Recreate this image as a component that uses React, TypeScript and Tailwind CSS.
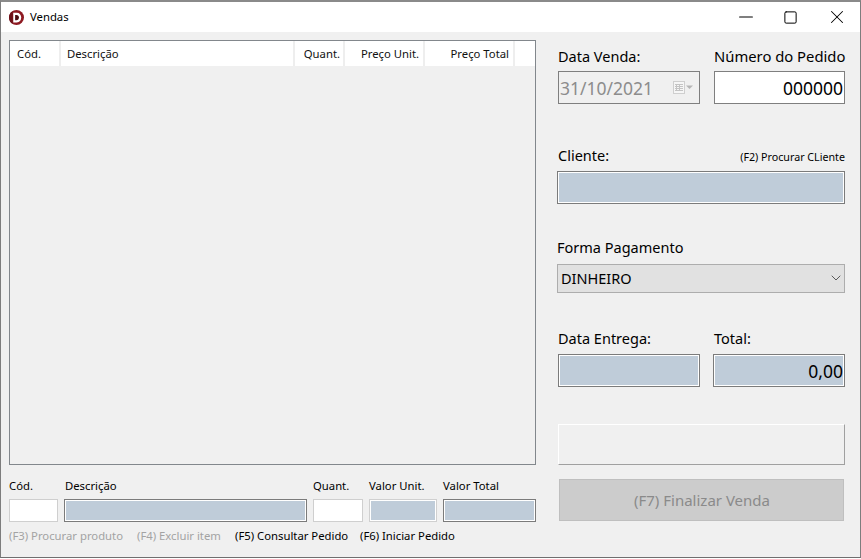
import { ChevronDown, Minus, Square, X } from "lucide-react"

const FONT = "font-['Noto_Sans','Open_Sans',sans-serif]"

const columns = [
  { label: "Cód.", width: "w-[51px]", align: "pl-[7px]" },
  { label: "Descrição", width: "w-[234px]", align: "pl-[6px]" },
  { label: "Quant.", width: "w-[50px]", align: "justify-end pr-[3px]" },
  { label: "Preço Unit.", width: "w-[80px]", align: "justify-end pr-[4px]" },
  { label: "Preço Total", width: "w-[90px]", align: "justify-end pr-[4px]" },
]

function Logo() {
  return (
    <svg width="15" height="15" viewBox="0 0 16 16" className="shrink-0">
      <circle cx="8" cy="8" r="8" fill="#8e1a22" />
      <path d="M0 8a8 8 0 0 1 4-7v14a8 8 0 0 1-4-7z" fill="#6d1219" />
      <path d="M4.5 2.8h3.7C11.3 2.8 13 5 13 8s-1.700 5.200-4.800 5.200H4.500z" fill="#fff" />
      <path d="M6.500 5.200h1.500c1.600 0 2.600 1.100 2.600 2.800s-1 2.800-2.600 2.800H6.500z" fill="#4a0c11" />
    </svg>
  )
}

function CalendarIcon() {
  return (
    <svg width="21" height="13" viewBox="0 0 21 13">
      <rect x="0.5" y="0.5" width="11" height="12" fill="#f6f6f6" stroke="#cfcfcf" />
      <path d="M2 3.500h8M2 5.500h8M2 7.500h8M2 9.500h8M3.500 3v7M6.500 3v7" stroke="#c4c4c4" strokeWidth="1" />
      <path d="M13 4.500h7l-3.500 3.500z" fill="#b5b5b5" />
    </svg>
  )
}

export default function App() {
  return (
    <div className={`${FONT} w-[861px] h-[559px] overflow-hidden bg-white text-black`}>
      <div className="h-[558px] border-t-2 border-x border-b border-t-[#8a8a8a] border-x-[#7d7d7d] border-b-[#6f6f6f] bg-[#f0f0f0] flex flex-col">
        <div className="h-[30px] bg-white flex items-center shrink-0">
          <div className="flex items-center gap-[6px] pl-[8px] text-[11.3px]">
            <Logo />
            <span>Vendas</span>
          </div>
          <div className="ml-auto flex items-center">
            <div className="w-[46px] flex justify-center translate-x-[1px]"><Minus size={22} strokeWidth={1.1} /></div>
            <div className="w-[46px] flex justify-center -translate-x-[1px]"><Square size={15} strokeWidth={1.6} /></div>
            <div className="w-[46px] flex justify-center"><X size={22} strokeWidth={1.1} /></div>
          </div>
        </div>

        <div className="flex flex-1 pl-[8px] pt-[8px]">
          <div className="w-[527px] shrink-0">
            <div className="h-[425px] border border-[#82878c] bg-[#f0f0f0]">
              <div className="h-[25px] bg-white flex text-[11.3px] text-[#111]">
                {columns.map((c) => (
                  <div key={c.label} className={`${c.width} ${c.align} flex items-center pt-[2px] border-r-2 border-[#eeeeee]`}>
                    {c.label}
                  </div>
                ))}
              </div>
            </div>

            <div className="mt-[13px] flex text-[11.3px] leading-[16px]">
              <div className="w-[55px] shrink-0">
                <div>Cód.</div>
                <div className="mt-[5px] w-[49px] h-[23px] bg-white border border-[#cfcfcf]" />
              </div>
              <div className="w-[249px] shrink-0">
                <div className="pl-[1px]">Descrição</div>
                <div className="mt-[5px] w-[243px] h-[23px] bg-[#bfccd9] border border-[#7b7b7b] outline outline-1 -outline-offset-2 outline-white" />
              </div>
              <div className="w-[56px] shrink-0">
                <div>Quant.</div>
                <div className="mt-[5px] w-[50px] h-[23px] bg-white border border-[#cfcfcf]" />
              </div>
              <div className="w-[74px] shrink-0">
                <div>Valor Unit.</div>
                <div className="mt-[5px] w-[68px] h-[23px] bg-[#bfccd9] border border-[#d0d0d0] outline outline-1 -outline-offset-2 outline-white" />
              </div>
              <div className="w-[93px] shrink-0">
                <div>Valor Total</div>
                <div className="mt-[5px] w-[93px] h-[23px] bg-[#bfccd9] border border-[#7b7b7b] outline outline-1 -outline-offset-2 outline-white" />
              </div>
            </div>

            <div className="mt-[6px] flex text-[11.3px] leading-[16px] whitespace-nowrap">
              <span className="w-[128px] text-[#a3a3a3]">(F3) Procurar produto</span>
              <span className="w-[98px] text-[#a3a3a3]">(F4) Excluir item</span>
              <span className="w-[125px]">(F5) Consultar Pedido</span>
              <span>(F6) Iniciar Pedido</span>
            </div>
          </div>

          <div className="ml-[21px] w-[288px] shrink-0 text-[14.5px] leading-[20px]">
            <div className="flex mt-[6px]">
              <div className="w-[157px] pl-[1px] shrink-0">
                <div>Data Venda:</div>
                <div className="mt-[5px] w-[142px] h-[33px] bg-[#f0f0f0] border border-[#7f7f7f] flex items-center pl-[1px] pr-[5px] text-[#8c8c8c] text-[17.5px]">
                  <span>31/10/2021</span>
                  <span className="ml-auto"><CalendarIcon /></span>
                </div>
              </div>
              <div className="flex-1">
                <div className="text-[14.8px] whitespace-nowrap">Número do Pedido</div>
                <div className="mt-[5px] w-[131px] h-[33px] bg-white border border-[#7f7f7f] flex items-center justify-end pr-[1px] text-[17.5px]">
                  000000
                </div>
              </div>
            </div>

            <div className="mt-[41px] flex items-end justify-between">
              <span className="pl-[1px]">Cliente:</span>
              <span className="text-[10.7px] leading-[16px]">(F2) Procurar CLiente</span>
            </div>
            <div className="mt-[6px] h-[33px] bg-[#bfccd9] border border-[#7b7b7b] outline outline-1 -outline-offset-2 outline-white" />

            <div className="mt-[33px]">Forma Pagamento</div>
            <div className="mt-[7px] h-[29px] bg-[#e1e1e1] border border-[#adadad] flex items-center pl-[3px] pb-[1px]">
              <span>DINHEIRO</span>
              <ChevronDown size={16} strokeWidth={1.3} className="ml-auto text-[#444]" />
            </div>

            <div className="flex mt-[35px]">
              <div className="w-[157px] pl-[1px] shrink-0">
                <div>Data Entrega:</div>
                <div className="mt-[6px] w-[142px] h-[33px] bg-[#bfccd9] border border-[#7b7b7b] outline outline-1 -outline-offset-2 outline-white" />
              </div>
              <div className="flex-1">
                <div>Total:</div>
                <div className="-ml-[1px] mt-[6px] h-[33px] bg-[#bfccd9] border border-[#7b7b7b] outline outline-1 -outline-offset-2 outline-white flex items-center justify-end pr-[1px] text-[17.5px]">
                  0,00
                </div>
              </div>
            </div>

            <div className="ml-[1px] mt-[37px] h-[41px] border-t border-l border-white border-r border-b border-r-[#a0a0a0] border-b-[#a0a0a0]" />

            <div className="ml-[2px] mt-[14px] w-[285px] h-[42px] bg-[#cccccc] border border-[#bfbfbf] flex items-center justify-center pl-[1px] text-[#8a8a8a] text-[15px]">
              (F7) Finalizar Venda
            </div>
          </div>
        </div>
      </div>
    </div>
  )
}
